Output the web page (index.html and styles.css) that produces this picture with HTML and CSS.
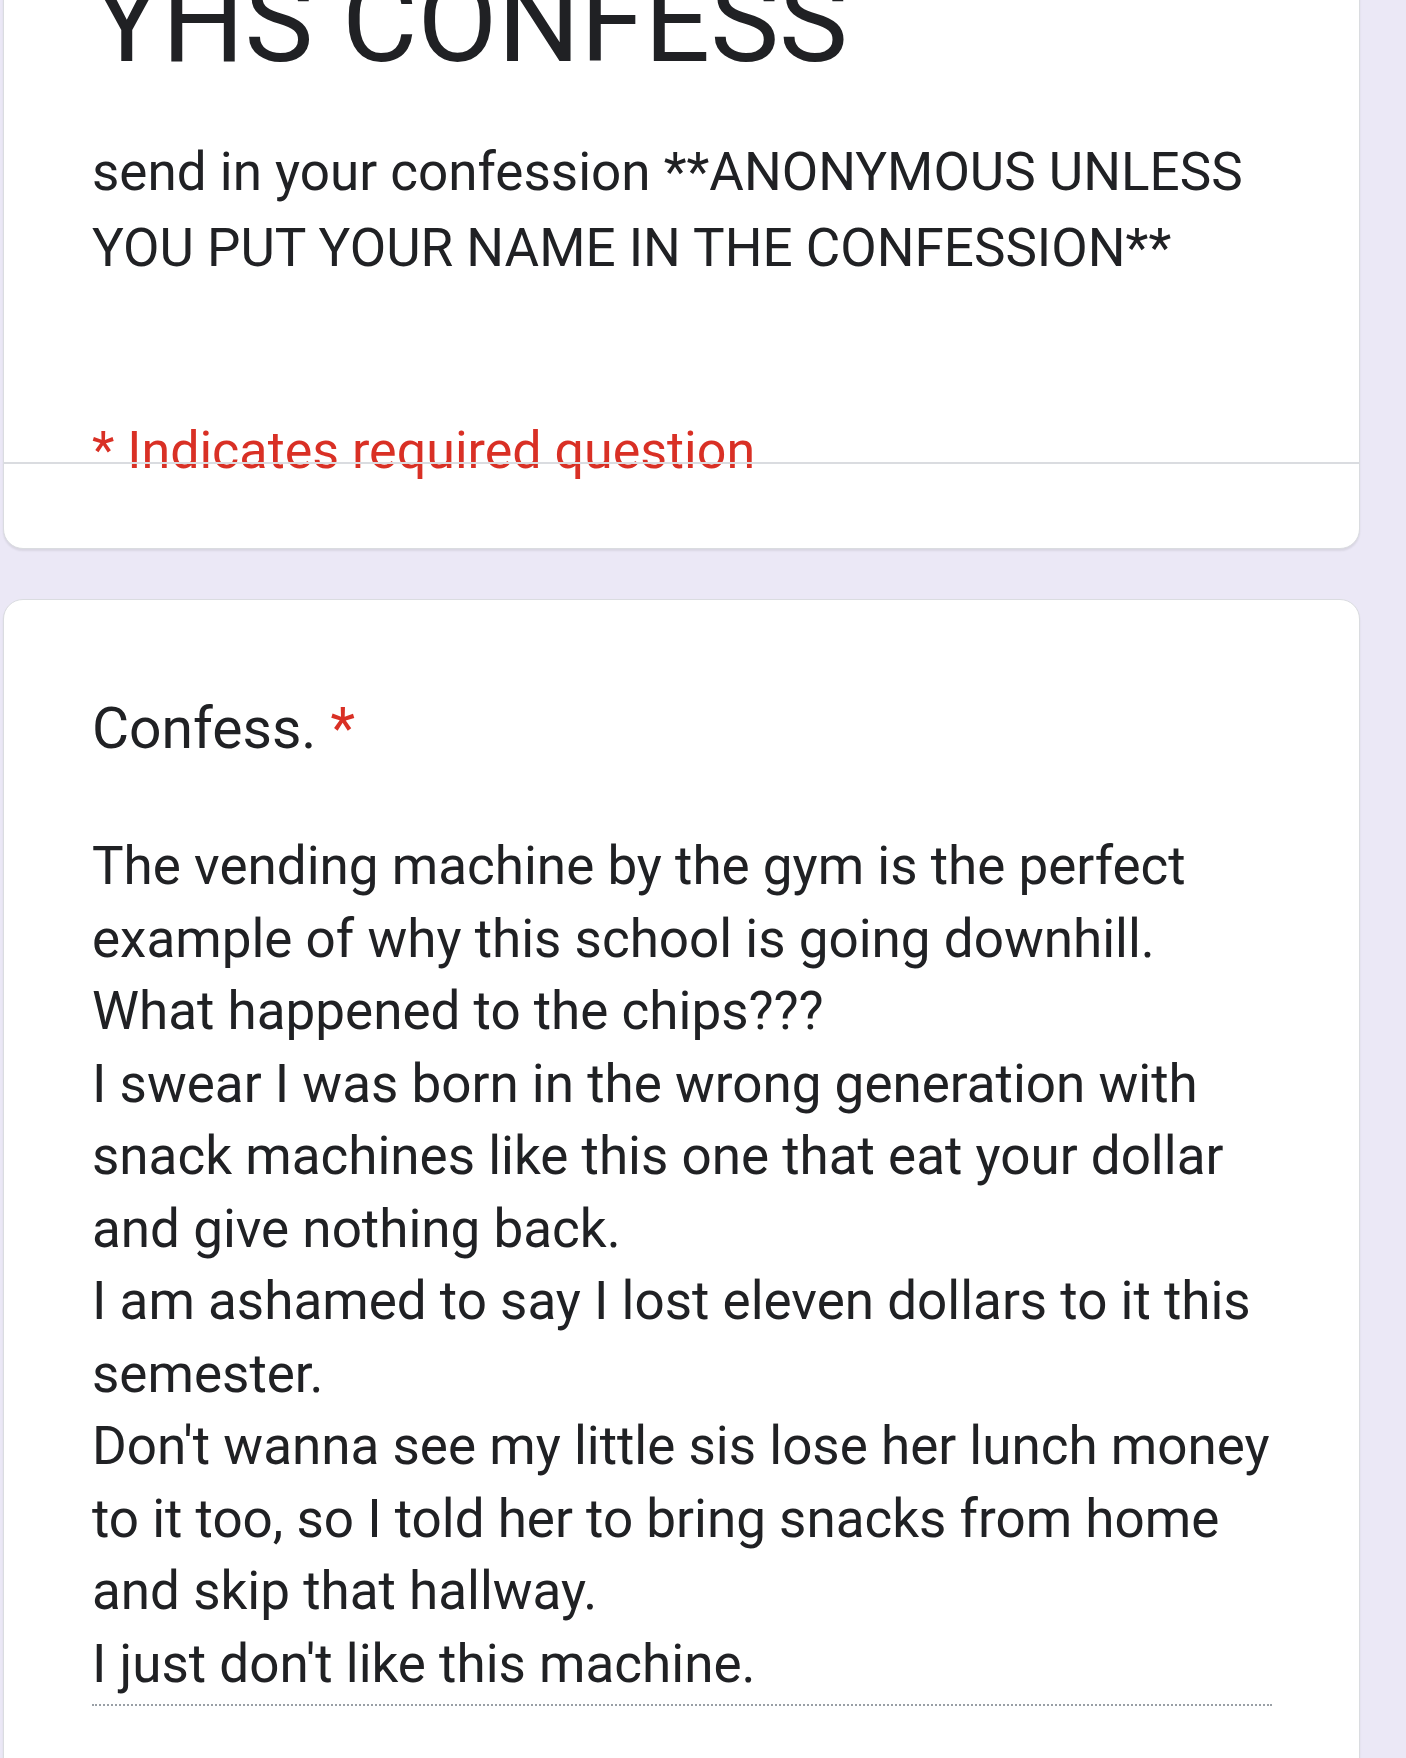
FILE: index.html
```html
<!DOCTYPE html>
<html lang="en">
<head>
  <meta charset="UTF-8">
  <meta name="viewport" content="width=device-width, initial-scale=1.0">
  <title>YHS CONFESS</title>
  <link rel="stylesheet" href="styles.css">
</head>
<body>

  <div class="form">
    <div class="card header-card">
      <h1 class="form-title">YHS CONFESS</h1>
      <p class="form-desc">send in your confession **ANONYMOUS UNLESS YOU PUT YOUR NAME IN THE CONFESSION**</p>
      <p class="required-note">* Indicates required question</p>
      <hr class="divider">
    </div>

    <div class="card question-card">
      <div class="question-title">Confess. <span class="req">*</span></div>
      <div class="answer">The vending machine by the gym is the perfect example of why this school is going downhill.
What happened to the chips???
I swear I was born in the wrong generation with snack machines like this one that eat your dollar and give nothing back.
I am ashamed to say I lost eleven dollars to it this semester.
Don't wanna see my little sis lose her lunch money to it too, so I told her to bring snacks from home and skip that hallway.
I just don't like this machine.</div>
    </div>
  </div>

</body>
</html>
```

FILE: styles.css
```css
* {
  margin: 0;
  padding: 0;
  box-sizing: border-box;
}

body {
  font-family: Roboto, "Liberation Sans", Arial, sans-serif;
  background-color: #ebe8f6;
  color: #202124;
  padding: 0 46px 0 3px;
  overflow: hidden;
}

.form {
  display: flex;
  flex-direction: column;
  gap: 50px;
  margin-top: -101px;
}

.card {
  background-color: #ffffff;
  border: 1px solid #dadce0;
  border-radius: 20px;
  box-shadow: 0 2px 2px rgba(0, 0, 0, 0.08);
  padding: 0 88px;
}

.header-card {
  padding-top: 53px;
  padding-bottom: 84px;
}

.form-title {
  font-size: 116px;
  font-weight: 400;
  line-height: 136px;
}

.form-desc {
  font-size: 53px;
  line-height: 76px;
  margin-top: 45px;
}

.required-note {
  color: #d93025;
  font-size: 52px;
  line-height: 70px;
  margin-top: 130px;
}

.divider {
  position: relative;
  border: none;
  border-top: 2px solid #dadce0;
  margin: -24px -88px 0;
}

.question-card {
  padding-top: 95px;
  padding-bottom: 120px;
}

.question-title {
  font-size: 57px;
  line-height: 67px;
}

.question-title .req {
  color: #d93025;
}

.answer {
  font-size: 53px;
  line-height: 72.5px;
  white-space: pre-wrap;
  margin-top: 68px;
  margin-right: -1px;
  padding-bottom: 4px;
  border-bottom: 2px dotted #9aa0a6;
}
```
